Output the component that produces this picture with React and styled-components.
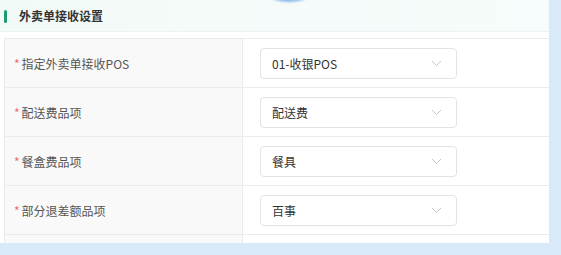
import styled, { createGlobalStyle } from "styled-components"

const Global = createGlobalStyle`
  html, body {
    margin: 0;
    padding: 0;
    background: #d8eaf9;
    font-family: "Noto Sans CJK SC", "Noto Sans", sans-serif;
  }
`

const Panel = styled.div`
  width: 549px;
  height: 243px;
  background: #fff;
  overflow: hidden;
  display: flex;
  flex-direction: column;
`

const Header = styled.div`
  position: relative;
  height: 30px;
  flex-shrink: 0;
  display: flex;
  align-items: center;
  gap: 12px;
  padding: 1px 0 0 4px;
  background: linear-gradient(90deg, #f2faf7 0%, #f5fbfa 60%, #f7fbfb 100%);
  border-bottom: 1px solid #eef2f2;

  &::after {
    content: "";
    position: absolute;
    left: 272px;
    top: -8px;
    width: 34px;
    height: 10px;
    border-radius: 50%;
    background: #6aa4e6;
    filter: blur(0.8px);
    opacity: 0.75;
  }
`

const Bar = styled.span`
  width: 3px;
  height: 13px;
  border-radius: 2px;
  background: #1e9c6b;
`

const Title = styled.span`
  font-size: 12px;
  font-weight: 600;
  color: #333;
  margin-top: -2px;
`

const Table = styled.div`
  margin: 6px 0 0 4px;
  border-top: 1px solid #ebebeb;
  border-left: 1px solid #ebebeb;
`

const Row = styled.div`
  display: grid;
  grid-template-columns: 238px 1fr;
  height: 48px;
  border-bottom: 1px solid #ebebeb;
`

const Label = styled.div`
  background: #f9f9f9;
  border-right: 1px solid #ebebeb;
  display: flex;
  align-items: center;
  padding-left: 9px;
  font-size: 12px;
  color: #555;
`

const Star = styled.span`
  color: #f26a6a;
  margin-right: 2px;
`

const Cell = styled.div`
  display: flex;
  align-items: center;
  padding-left: 17px;
`

const Select = styled.div`
  width: 197px;
  height: 31px;
  box-sizing: border-box;
  border: 1px solid #e3e3e3;
  border-radius: 4px;
  background: #fff;
  display: flex;
  align-items: center;
  justify-content: space-between;
  padding: 0 14px 0 11px;
  font-size: 12px;
  color: #333;
`

const Chevron = () => (
  <svg width="11" height="7" viewBox="0 0 11 7" fill="none">
    <path d="M1 1l4.5 4.5L10 1" stroke="#c8c8c8" strokeWidth="1" />
  </svg>
)

const rows = [
  ["指定外卖单接收POS", "01-收银POS"],
  ["配送费品项", "配送费"],
  ["餐盒费品项", "餐具"],
  ["部分退差额品项", "百事"],
  ["", ""],
]

export default function App() {
  return (
    <>
      <Global />
      <Panel>
        <Header>
          <Bar />
          <Title>外卖单接收设置</Title>
        </Header>
        <Table>
          {rows.map(([label, value], i) => (
            <Row key={i}>
              <Label>
                {label && <Star>*</Star>}
                {label}
              </Label>
              <Cell>
                <Select>
                  {value}
                  <Chevron />
                </Select>
              </Cell>
            </Row>
          ))}
        </Table>
      </Panel>
    </>
  )
}
